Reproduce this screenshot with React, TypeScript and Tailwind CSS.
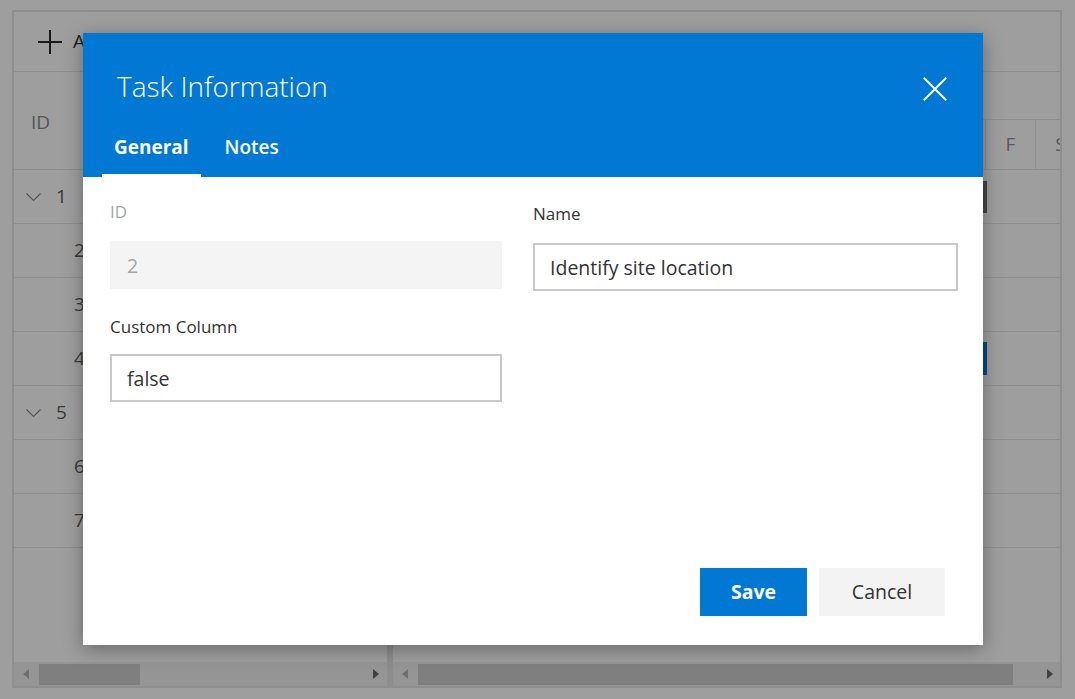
const rows = [
  { id: 1, parent: true, bar: "dark" },
  { id: 2, parent: false, bar: "" },
  { id: 3, parent: false, bar: "" },
  { id: 4, parent: false, bar: "blue" },
  { id: 5, parent: true, bar: "" },
  { id: 6, parent: false, bar: "" },
  { id: 7, parent: false, bar: "" },
]

const days = ["S", "M", "T", "W", "T", "F", "S", "S", "M", "T", "W", "T", "F", "S"]

function Chevron() {
  return (
    <svg width="15" height="8" viewBox="0 0 15 8" fill="none">
      <path d="M0.5 0.5 L7.5 7.5 L14.5 0.5" stroke="#8a8a8a" strokeWidth="1.1" />
    </svg>
  )
}

function Arrow({ dir, color }: { dir: "left" | "right"; color: string }) {
  return (
    <svg width="6" height="10" viewBox="0 0 6 10">
      {dir === "left" ? <polygon points="6,0 0,5 6,10" fill={color} /> : <polygon points="0,0 6,5 0,10" fill={color} />}
    </svg>
  )
}

function Field({
  label,
  value,
  disabled,
  labelGap,
}: {
  label: string
  value: string
  disabled?: boolean
  labelGap: string
}) {
  return (
    <div className="flex flex-col">
      <label className={`text-[17px] leading-6 ${disabled ? "text-[#a6a6a6]" : "text-[#333]"}`}>{label}</label>
      <input
        readOnly
        value={value}
        className={`${labelGap} h-[48px] w-full border-2 px-[15px] text-[19.5px] outline-none ${
          disabled ? "border-[#f4f4f4] bg-[#f4f4f4] text-[#a6a6a6]" : "border-[#c8c8c8] bg-white text-[#333]"
        }`}
      />
    </div>
  )
}

export default function App() {
  return (
    <div className="relative h-[699px] w-[1075px] overflow-hidden bg-white font-['Open_Sans',sans-serif]">
      {/* gantt behind the dialog */}
      <div className="ml-[12px] mt-[10px] flex h-[678px] w-[1050px] flex-col border-2 border-[#e6e6e6]">
        <div className="flex h-[60px] items-center border-b border-[#e6e6e6] pl-[24px] text-[#333]">
          <svg width="24" height="24" viewBox="0 0 24 24">
            <path d="M12 0 V24 M0 12 H24" stroke="#2a2a2a" strokeWidth="2" />
          </svg>
          <span className="ml-[11px] text-[19px]">Add</span>
        </div>

        <div className="flex flex-1">
          {/* left grid */}
          <div className="flex w-[373px] flex-col">
            <div className="flex h-[98px] items-center border-b border-[#e6e6e6] pl-[17px] text-[19px] text-[#8c8c8c]">
              <span className="mt-[3px]">ID</span>
            </div>
            {rows.map((r) => (
              <div key={r.id} className="flex h-[54px] items-center border-b border-[#e6e6e6] text-[19px] text-[#5e5e5e]">
                {r.parent ? (
                  <>
                    <span className="ml-[12px] flex">
                      <Chevron />
                    </span>
                    <span className="ml-[15px]">{r.id}</span>
                  </>
                ) : (
                  <span className="ml-[60px]">{r.id}</span>
                )}
              </div>
            ))}
            <div className="flex-1" />
            <div className="flex h-[24px] items-center bg-[#f1f1f1] pl-[9px] pr-[8px]">
              <Arrow dir="left" color="#b4b4b4" />
              <div className="ml-[10px] h-[21px] w-[101px] bg-[#cdcdcd]" />
              <div className="flex-1" />
              <Arrow dir="right" color="#6a6a6a" />
            </div>
          </div>

          <div className="w-[6px] bg-[#e4e4e4]" />

          {/* chart */}
          <div className="flex flex-1 flex-col overflow-hidden">
            <div className="h-[48px] border-b border-[#e6e6e6]" />
            <div className="flex h-[50px] border-b border-[#e6e6e6]">
              <div className="ml-[-7px] flex">
                {days.map((d, i) => (
                  <div
                    key={i}
                    className="flex w-[50px] shrink-0 items-center justify-center border-r border-[#e6e6e6] text-[19px] text-[#919191]"
                  >
                    {d}
                  </div>
                ))}
              </div>
            </div>
            {rows.map((r) => (
              <div key={r.id} className="flex h-[54px] items-center border-b border-[#e6e6e6]">
                {r.bar === "dark" && <div className="ml-[400px] h-[32px] w-[194px] bg-[#707070]" />}
                {r.bar === "blue" && <div className="ml-[400px] h-[33px] w-[194px] bg-[#0a78d0]" />}
              </div>
            ))}
            <div className="flex-1" />
            <div className="flex h-[24px] items-center bg-[#f1f1f1] pl-[9px] pr-[7px]">
              <Arrow dir="left" color="#b4b4b4" />
              <div className="ml-[10px] h-[21px] w-[595px] bg-[#cdcdcd]" />
              <div className="flex-1" />
              <Arrow dir="right" color="#6a6a6a" />
            </div>
          </div>
        </div>
      </div>

      {/* modal overlay */}
      <div className="absolute inset-0 bg-[rgba(0,0,0,0.38)]" />

      <div className="absolute left-[83px] top-[33px] flex h-[612px] w-[900px] flex-col bg-white shadow-[0_4px_18px_rgba(0,0,0,0.35)]">
        <div className="flex h-[144px] flex-col bg-[#0078d4] text-white">
          <div className="flex items-start justify-between pl-[34px] pr-[36px] pt-[35px]">
            <h2 className="text-[28px] font-light leading-[36px]">Task Information</h2>
            <button type="button" className="mt-[9px]">
              <svg width="24" height="24" viewBox="0 0 24 24">
                <path d="M0.8 0.8 L23.2 23.2 M23.2 0.8 L0.8 23.2" stroke="white" strokeWidth="2" />
              </svg>
            </button>
          </div>
          <div className="mt-auto flex gap-3 pl-[19px]">
            <div className="border-b-[3px] border-white px-3 pb-[13px] text-[19px] font-bold leading-7">General</div>
            <div className="border-b-[3px] border-transparent px-3 pb-[13px] text-[19px] font-semibold leading-7">
              Notes
            </div>
          </div>
        </div>

        <div className="flex flex-1 gap-x-[31px] pl-[27px] pt-[23px]">
          <div className="flex w-[392px] flex-col">
            <Field label="ID" value="2" disabled labelGap="mt-[17px]" />
            <div className="mt-[26px]">
              <Field label="Custom Column" value="false" labelGap="mt-[15px]" />
            </div>
          </div>
          <div className="mt-[2px] w-[425px]">
            <Field label="Name" value="Identify site location" labelGap="mt-[17px]" />
          </div>
        </div>

        <div className="flex justify-end gap-3 pb-[29px] pr-[38px]">
          <button type="button" className="h-[48px] w-[107px] bg-[#0078d4] text-[19.5px] font-bold text-white">
            Save
          </button>
          <button type="button" className="h-[48px] w-[126px] bg-[#f3f3f3] text-[19.5px] text-[#333]">
            Cancel
          </button>
        </div>
      </div>
    </div>
  )
}
